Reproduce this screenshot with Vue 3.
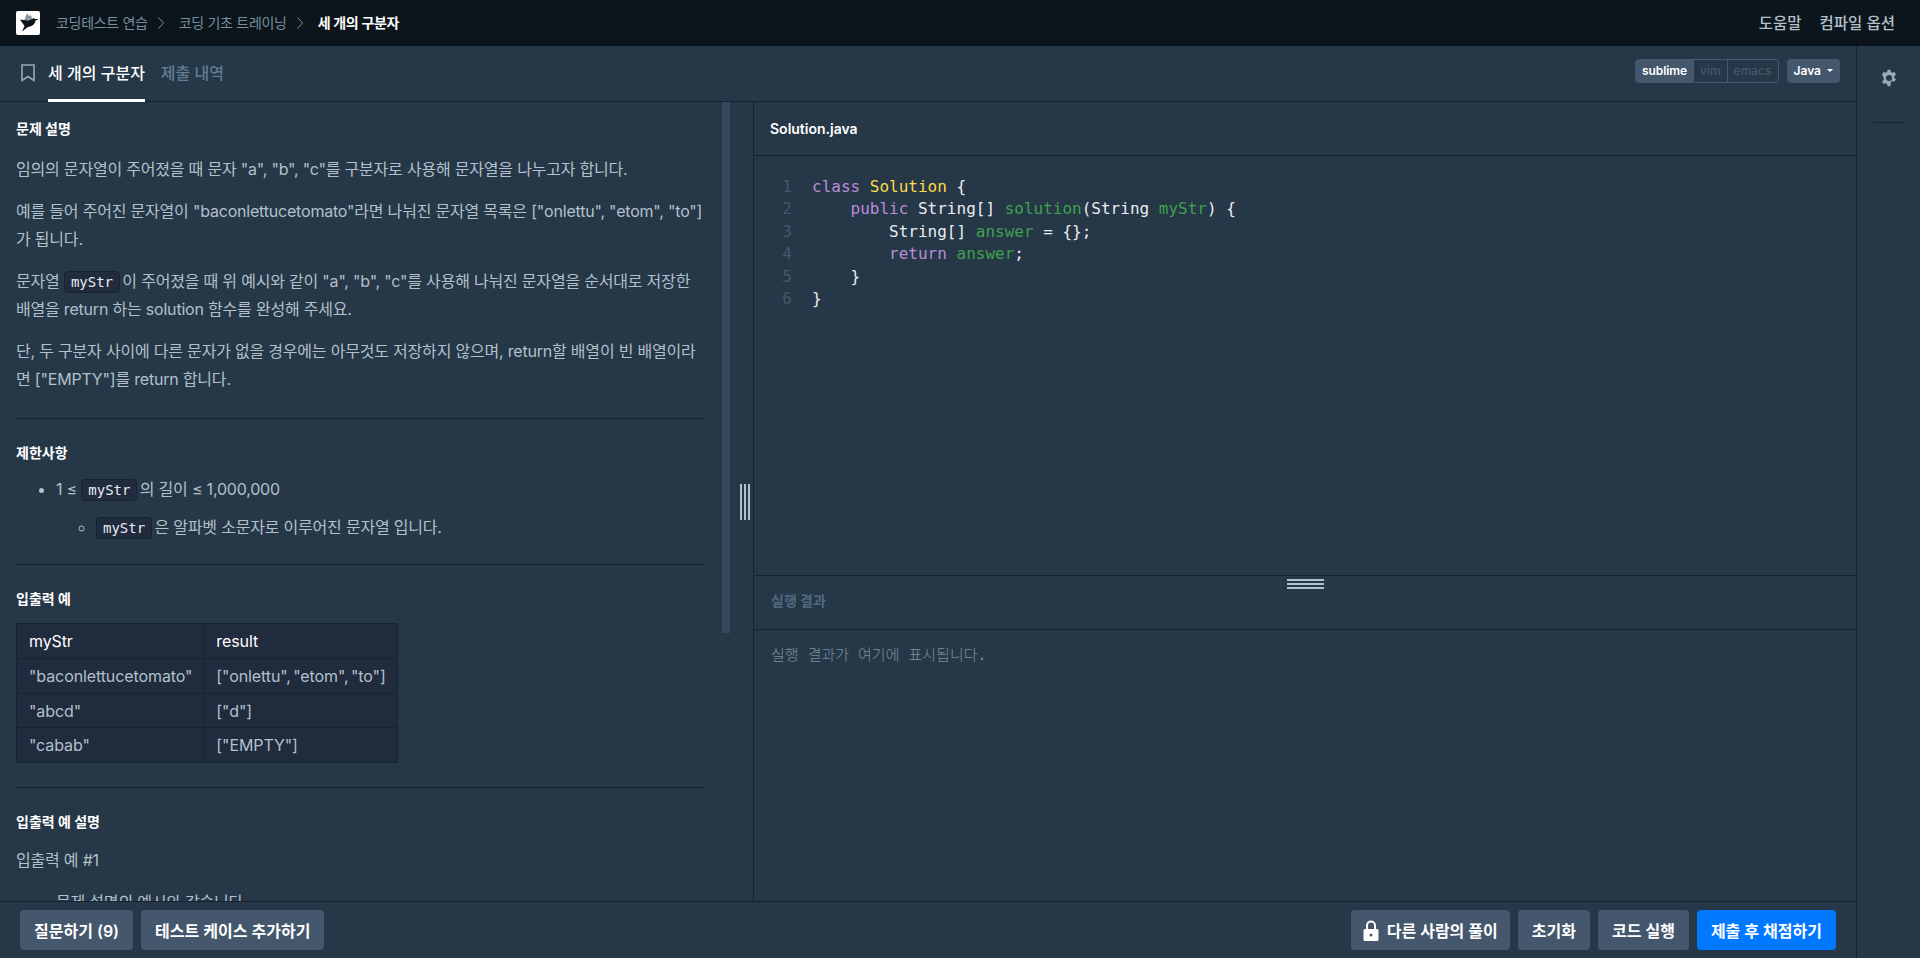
<template>
  <div class="page">
    <header class="topbar">
      <div class="logo">
        <svg viewBox="0 0 24 24" width="24" height="24">
          <path d="M8 10 L10 4.500 L11.500 2.500 L13 5 L15 4 L16 8 Z" fill="#8c959c" />
          <path d="M4 8.500 L12 9.500 L16 8 C17 7 18.500 7 19 8 L23 8 L19.500 9.500 C19 13 16 15.500 12 16 L6 20.500 L8.500 15 L6 11.500 Z" fill="#0c151c" />
        </svg>
      </div>
      <nav class="crumbs">
        <span>코딩테스트 연습</span>
        <svg class="chev" viewBox="0 0 6 12" width="6" height="12"><path d="M.5 .5 L5.500 6 L.5 11.500" fill="none" stroke="#78909c" stroke-width="1" /></svg>
        <span>코딩 기초 트레이닝</span>
        <svg class="chev" viewBox="0 0 6 12" width="6" height="12"><path d="M.5 .5 L5.500 6 L.5 11.500" fill="none" stroke="#78909c" stroke-width="1" /></svg>
        <strong>세 개의 구분자</strong>
      </nav>
      <div class="top-links">
        <span>도움말</span>
        <span>컴파일 옵션</span>
      </div>
    </header>

    <div class="workspace">
      <div class="main">
        <div class="tabbar">
          <svg class="bookmark" viewBox="0 0 14 18" width="14" height="18">
            <path d="M1 1 H13 V16.500 L7 12.500 L1 16.500 Z" fill="none" stroke="#98a8b9" stroke-width="1.600" />
          </svg>
          <div class="tab active">세 개의 구분자</div>
          <div class="tab">제출 내역</div>
          <div class="spacer"></div>
          <div class="keymap">
            <span class="on">sublime</span>
            <span>vim</span>
            <span>emacs</span>
          </div>
          <div class="lang">Java<i class="caret"></i></div>
        </div>

        <div class="panes">
          <section class="left">
            <div class="guide">
              <h6>문제 설명</h6>
              <p>임의의 문자열이 주어졌을 때 문자 "a", "b", "c"를 구분자로 사용해 문자열을 나누고자 합니다.</p>
              <p>예를 들어 주어진 문자열이 "baconlettucetomato"라면 나눠진 문자열 목록은 ["onlettu", "etom", "to"] 가 됩니다.</p>
              <p>문자열 <code>myStr</code> 이 주어졌을 때 위 예시와 같이 "a", "b", "c"를 사용해 나눠진 문자열을 순서대로 저장한 배열을 return 하는 solution 함수를 완성해 주세요.</p>
              <p>단, 두 구분자 사이에 다른 문자가 없을 경우에는 아무것도 저장하지 않으며, return할 배열이 빈 배열이라면 ["EMPTY"]를 return 합니다.</p>
              <hr />
              <h5>제한사항</h5>
              <ul class="limits">
                <li>1 ≤ <code>myStr</code> 의 길이 ≤ 1,000,000
                  <ul>
                    <li><code>myStr</code> 은 알파벳 소문자로 이루어진 문자열 입니다.</li>
                  </ul>
                </li>
              </ul>
              <hr />
              <h5>입출력 예</h5>
              <table>
                <thead>
                  <tr><th>myStr</th><th>result</th></tr>
                </thead>
                <tbody>
                  <tr v-for="row in examples" :key="row[0]">
                    <td>{{ row[0] }}</td>
                    <td>{{ row[1] }}</td>
                  </tr>
                </tbody>
              </table>
              <hr />
              <h5>입출력 예 설명</h5>
              <p>입출력 예 #1</p>
              <ul>
                <li>문제 설명의 예시와 같습니다.</li>
              </ul>
            </div>
            <div class="thumb"></div>
            <div class="v-handle"></div>
          </section>

          <section class="right">
            <div class="filetab">Solution.java</div>
            <div class="editor">
              <div class="gutter">
                <div v-for="n in 6" :key="n">{{ n }}</div>
              </div>
              <pre class="code"><span class="kw">class</span> <span class="cls">Solution</span> {
    <span class="kw">public</span> String[] <span class="fn">solution</span>(String <span class="fn">myStr</span>) {
        String[] <span class="fn">answer</span> = {};
        <span class="kw">return</span> <span class="fn">answer</span>;
    }
}</pre>
            </div>
            <div class="result-head">실행 결과<div class="h-handle"></div></div>
            <div class="result-body">실행 결과가 여기에 표시됩니다.</div>
          </section>
        </div>

        <footer class="bottombar">
          <button>질문하기 (9)</button>
          <button>테스트 케이스 추가하기</button>
          <div class="spacer"></div>
          <button class="with-icon">
            <svg viewBox="0 0 16 21" width="16" height="21">
              <path d="M4 10 V5.500 a4 4 0 0 1 8 0 V10" fill="none" stroke="#fff" stroke-width="2" />
              <path fill="#fff" fill-rule="evenodd" d="M2 9 H14 a1.500 1.500 0 0 1 1.500 1.500 V19.500 a1.500 1.500 0 0 1-1.500 1.500 H2 a1.500 1.500 0 0 1-1.500-1.500 V10.500 a1.500 1.500 0 0 1 1.500-1.500z M8 13.500 a1.500 1.500 0 1 0 0 3 a1.500 1.500 0 0 0 0-3z" />
            </svg>
            다른 사람의 풀이
          </button>
          <button>초기화</button>
          <button>코드 실행</button>
          <button class="primary">제출 후 채점하기</button>
        </footer>
      </div>

      <aside class="sidebar">
        <svg viewBox="0 0 24 24" width="18" height="18">
          <path fill="#98a8b9" fill-rule="evenodd" d="M10 1h4l.6 3.100c.6.2 1.200.5 1.700.9l3-1 2 3.400-2.400 2.100c.1.7.1 1.300 0 2l2.400 2.100-2 3.400-3-1c-.5.4-1.100.7-1.700.9L14 23h-4l-.6-3.100c-.6-.2-1.200-.5-1.700-.9l-3 1-2-3.400 2.400-2.100c-.1-.7-.1-1.300 0-2L2.700 7.400 4.700 4l3 1c.5-.4 1.100-.7 1.700-.9zM12 8a4 4 0 1 0 0 8 4 4 0 0 0 0-8z" />
        </svg>
        <div class="side-line"></div>
      </aside>
    </div>
  </div>
</template>

<script setup>
const examples = [
  ['"baconlettucetomato"', '["onlettu", "etom", "to"]'],
  ['"abcd"', '["d"]'],
  ['"cabab"', '["EMPTY"]']
]
</script>

<style>
html, body {
  margin: 0;
  background: #263747;
  overflow: hidden;
}
</style>

<style scoped>
.page {
  height: 958px;
  display: flex;
  flex-direction: column;
  font-family: Inter, "Noto Sans CJK KR", sans-serif;
  color: #b2c0cc;
  background: #263747;
  overflow: hidden;
}

.topbar {
  height: 46px;
  flex: none;
  box-sizing: border-box;
  display: flex;
  align-items: center;
  padding: 0 25px 0 16px;
  background: #0c151c;
}

.logo {
  width: 24px;
  height: 24px;
  background: #fff;
  border-radius: 2px;
}

.crumbs {
  display: flex;
  align-items: center;
  margin: 0 0 2px 16px;
  font-size: 14px;
  letter-spacing: -0.3px;
  color: #78909c;
}

.chev {
  margin: 1px 15px 0 10px;
}

.crumbs strong {
  color: #fff;
  font-weight: 700;
}

.top-links {
  margin: 0 0 2px auto;
  display: flex;
  gap: 18px;
  font-size: 15.5px;
  font-weight: 500;
}

.workspace {
  flex: 1;
  min-height: 0;
  display: flex;
}

.main {
  flex: 1;
  min-width: 0;
  display: flex;
  flex-direction: column;
}

.tabbar {
  height: 56px;
  flex: none;
  box-sizing: border-box;
  display: flex;
  align-items: center;
  padding: 0 16px 0 21px;
  border-bottom: 1px solid #172334;
}

.bookmark {
  margin: 0 13px 2px 0;
}

.tab {
  align-self: flex-start;
  height: 56px;
  line-height: 54px;
  box-sizing: border-box;
  margin-right: 16px;
  font-size: 16px;
  font-weight: 500;
  color: #5f7f90;
}

.tab.active {
  color: #fff;
  border-bottom: 3px solid #fff;
}

.spacer {
  flex: 1;
}

.keymap {
  display: flex;
  height: 24px;
  margin-bottom: 6px;
  box-sizing: border-box;
  border: 1px solid #44576c;
  border-radius: 4px;
  font-size: 12px;
  line-height: 22px;
  color: #44576c;
  font-weight: 500;
}

.keymap span {
  padding: 0 6px;
  border-left: 1px solid #44576c;
}

.keymap .on {
  border-left: 0;
  padding: 0 6px;
  background: #44576c;
  color: #fff;
  font-weight: 600;
  letter-spacing: -0.1px;
}

.lang {
  height: 24px;
  margin: 0 0 6px 8px;
  padding: 0 7px;
  display: flex;
  align-items: center;
  border-radius: 4px;
  background: #44576c;
  color: #fff;
  font-size: 12px;
  font-weight: 600;
}

.caret {
  margin-left: 6px;
  border-top: 3px solid #fff;
  border-left: 3px solid transparent;
  border-right: 3px solid transparent;
}

.panes {
  flex: 1;
  min-height: 0;
  display: flex;
}

.left {
  position: relative;
  width: 754px;
  flex: none;
  box-sizing: border-box;
  border-right: 1px solid #172334;
  overflow: hidden;
}

.guide {
  width: 689px;
  padding: 19px 0 0 16px;
  font-size: 16px;
  line-height: 28px;
  letter-spacing: -0.2px;
}

h5, h6 {
  margin: 0 0 16px;
  color: #fff;
  font-size: 14px;
  font-weight: 700;
  line-height: 16px;
  letter-spacing: 0;
}

h6 {
  margin-bottom: 18px;
}

.guide p {
  margin: 0 0 14px;
}

.guide hr {
  border: 0;
  border-top: 1px solid #172334;
  margin: 25px 0 26px;
}

.guide table + hr {
  margin-top: 24px;
}

.guide .limits + hr {
  margin-top: 23px;
}

.guide ul {
  margin: 0 0 14px;
  padding-left: 40px;
  list-style: disc;
}

.guide .limits {
  margin: -2px 0 0;
}

.guide ul ul {
  margin: 0;
  list-style: circle;
}

.guide ul ul li {
  margin-top: 10px;
}

code {
  display: inline-block;
  font-family: "DejaVu Sans Mono", monospace;
  font-size: 14px;
  line-height: 20px;
  letter-spacing: 0;
  padding: 0 6px;
  margin: -3px -2px -3px 0;
  background: #202b3d;
  border: 1px solid #172334;
  border-radius: 4px;
  color: #e9ecf3;
}

table {
  border-collapse: collapse;
  line-height: 23.75px;
  letter-spacing: -0.1px;
  word-spacing: -2px;
}

th, td {
  border: 1px solid #172334;
  background: #202b3d;
  padding: 6px 11px 4px 12px;
  font-size: 16px;
  font-weight: 400;
  text-align: left;
  white-space: nowrap;
}

th {
  color: #fff;
}

.thumb {
  position: absolute;
  left: 722px;
  top: 0;
  width: 8px;
  height: 531px;
  background: #37485d;
}

.v-handle {
  position: absolute;
  left: 740px;
  top: 382px;
  width: 10px;
  height: 36px;
  background: repeating-linear-gradient(90deg, #b2c0cc 0 2px, #263747 2px 4px);
}

.right {
  flex: 1;
  min-width: 0;
  display: flex;
  flex-direction: column;
}

.filetab {
  height: 53px;
  flex: none;
  padding-left: 16px;
  border-bottom: 1px solid #172334;
  color: #fff;
  font-size: 14px;
  font-weight: 600;
  line-height: 54px;
}

.editor {
  height: 419px;
  flex: none;
  display: flex;
  padding-top: 20px;
  box-sizing: border-box;
  font-family: "DejaVu Sans Mono", monospace;
  font-size: 16px;
  line-height: 22.4px;
}

.gutter {
  width: 38px;
  box-sizing: border-box;
  text-align: right;
  color: #44576c;
}

.code {
  margin: 0 0 0 20px;
  font: inherit;
  color: #e9ecf3;
}

.kw { color: #b78dd8; }
.cls { color: #fadc46; }
.fn { color: #3fa14c; }

.result-head {
  position: relative;
  height: 55px;
  flex: none;
  box-sizing: border-box;
  padding-left: 17px;
  border-top: 1px solid #172334;
  border-bottom: 1px solid #172334;
  color: #4f6a80;
  font-size: 14px;
  font-weight: 700;
  line-height: 50px;
}

.h-handle {
  position: absolute;
  left: 533px;
  top: 3px;
  width: 37px;
  height: 10px;
  background: repeating-linear-gradient(180deg, #b2c0cc 0 2px, #263747 2px 4px);
}

.result-body {
  flex: 1;
  padding: 14px 17px;
  font-family: "DejaVu Sans Mono", "Noto Sans CJK KR", monospace;
  font-size: 15px;
  font-weight: 300;
  line-height: 22px;
  color: #78909c;
}

.sidebar {
  width: 63px;
  flex: none;
  display: flex;
  flex-direction: column;
  align-items: center;
  padding-top: 23px;
  border-left: 1px solid #172334;
}

.side-line {
  width: 31px;
  height: 1px;
  margin-top: 35px;
  background: #172334;
}

.bottombar {
  height: 57px;
  flex: none;
  box-sizing: border-box;
  display: flex;
  align-items: center;
  gap: 8px;
  padding: 0 20px;
  border-top: 1px solid #172334;
  background: #263747;
}

button {
  height: 40px;
  padding: 0 14px;
  display: flex;
  align-items: center;
  border: 0;
  border-radius: 4px;
  background: #44576c;
  color: #fff;
  font-family: inherit;
  font-size: 16px;
  font-weight: 600;
}

button.with-icon {
  gap: 8px;
  padding: 0 12px;
}

button.primary {
  background: #0078ff;
}
</style>
